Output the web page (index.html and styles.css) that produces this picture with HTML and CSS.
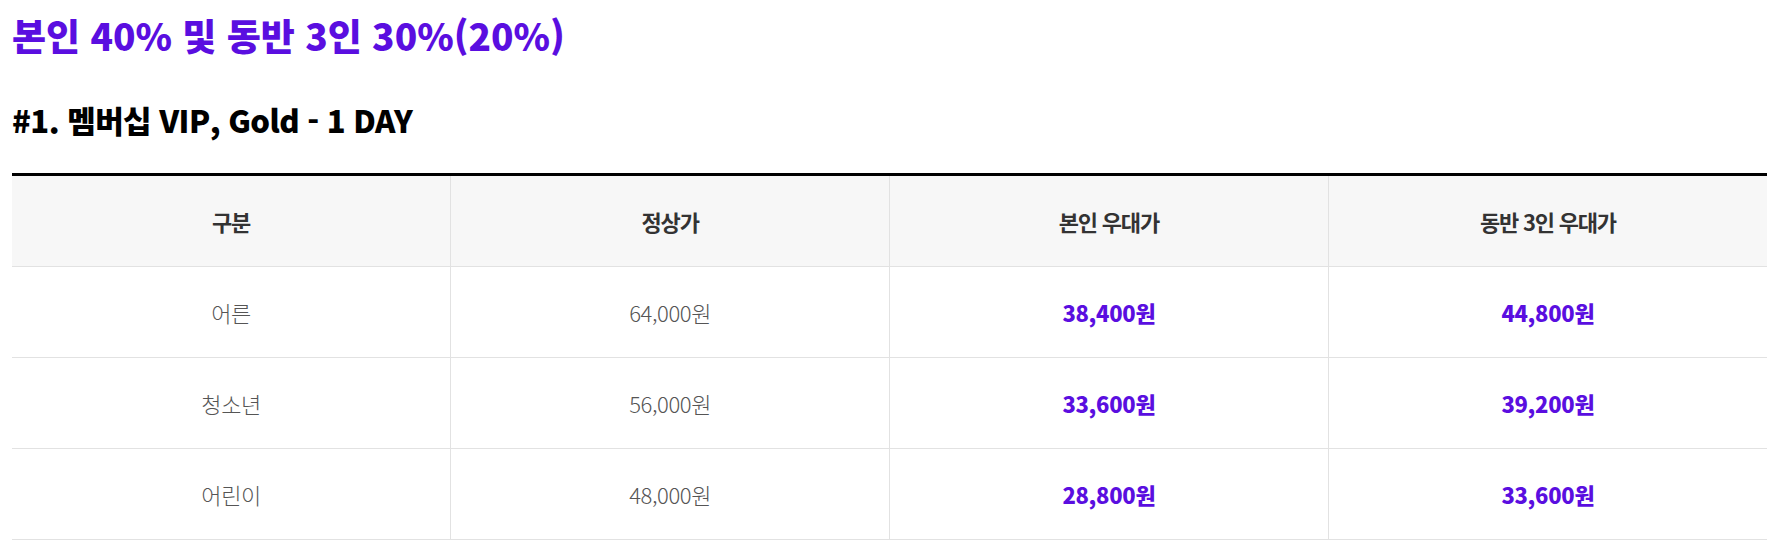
FILE: index.html
```html
<!DOCTYPE html>
<html lang="ko">
<head>
<meta charset="utf-8">
<link rel="stylesheet" href="styles.css">
</head>
<body>
<div class="page">
  <h2 class="title">본인 40% 및 동반 3인 30%(20%)</h2>
  <h3 class="subtitle">#1. 멤버십 VIP, Gold - 1 DAY</h3>
  <table class="price-table">
    <thead>
      <tr>
        <th>구분</th>
        <th>정상가</th>
        <th>본인 우대가</th>
        <th>동반 3인 우대가</th>
      </tr>
    </thead>
    <tbody>
      <tr>
        <td>어른</td>
        <td>64,000원</td>
        <td class="deal">38,400원</td>
        <td class="deal">44,800원</td>
      </tr>
      <tr>
        <td>청소년</td>
        <td>56,000원</td>
        <td class="deal">33,600원</td>
        <td class="deal">39,200원</td>
      </tr>
      <tr>
        <td>어린이</td>
        <td>48,000원</td>
        <td class="deal">28,800원</td>
        <td class="deal">33,600원</td>
      </tr>
    </tbody>
  </table>
</div>
</body>
</html>
```
FILE: styles.css
```css
html, body {
  margin: 0;
  padding: 0;
  background: #fff;
}
body {
  font-family: "Noto Sans CJK KR", "Noto Sans", sans-serif;
}
.page {
  padding: 0 12px;
}
.title {
  margin: 8px 0 0;
  font-size: 37px;
  font-weight: 900;
  line-height: normal;
  color: #5a0ee0;
  letter-spacing: 0;
}
.subtitle {
  margin: 35px 0 0;
  font-size: 31px;
  font-weight: 900;
  line-height: normal;
  color: #000;
  letter-spacing: -0.55px;
}
.price-table {
  margin-top: 31px;
  width: 100%;
  border-collapse: collapse;
  table-layout: fixed;
  border-top: 3px solid #000;
}
.price-table th,
.price-table td {
  height: 90px;
  padding: 0;
  text-align: center;
  vertical-align: middle;
  border-bottom: 1px solid #e2e2e2;
  border-left: 1px solid #e2e2e2;
  font-size: 22px;
  letter-spacing: -1.2px;
}
.price-table th:first-child,
.price-table td:first-child {
  border-left: none;
}
.price-table th {
  background: #f7f7f7;
  font-weight: 700;
  color: #333;
}
.price-table td {
  font-weight: 300;
  color: #555;
  letter-spacing: -0.4px;
}
.price-table td.deal {
  font-weight: 900;
  color: #5a0ee0;
  letter-spacing: -0.3px;
}
```
